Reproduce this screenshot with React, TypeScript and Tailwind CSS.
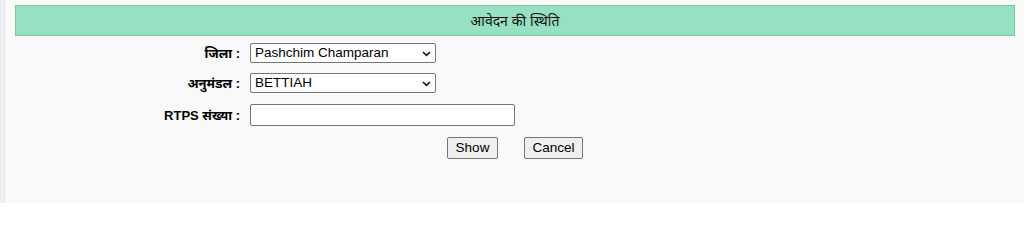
import React from "react";

function Chevron() {
  return (
    <svg
      className="pointer-events-none absolute right-[5px] top-[8px]"
      width="9"
      height="6"
      viewBox="0 0 9 6"
      fill="none"
    >
      <path d="M1 1 L4.5 4.4 L8 1" stroke="#111" strokeWidth="1.6" />
    </svg>
  );
}

function SelectBox({ value }: { value: string }) {
  return (
    <div className="relative h-[20px] w-[186px]">
      <select
        defaultValue={value}
        className="block h-[20px] w-[186px] appearance-none rounded-[2px] border border-[#767676] bg-white pl-[4px] text-[13.5px] leading-[18px] text-black outline-none"
        style={{ fontFamily: '"Liberation Sans", Arial, sans-serif' }}
      >
        <option>{value}</option>
      </select>
      <Chevron />
    </div>
  );
}

const label = "w-[241px] translate-y-[1px] pr-[1px] text-right text-[13px] font-bold leading-[20px] text-black";

export default function App() {
  const font = { fontFamily: '"Liberation Sans", Arial, "Noto Sans Devanagari", sans-serif' };
  return (
    <div className="relative min-h-[203px] w-full overflow-hidden bg-[#f9f9f9]" style={font}>
      <div className="absolute left-0 top-0 h-full w-[2px] bg-[#efedf3]" />
      <div className="absolute left-[3px] top-0 h-full w-[2px] bg-[#ebe8f0]" />
      <div className="pt-[5px]">
        <div className="ml-[15px] flex h-[31px] w-[1000px] items-center justify-center border border-[#7cc8a2] bg-[#97e0c1] text-[14px] leading-[20px] text-[#111]">
          आवेदन की स्थिति
        </div>
        <div className="mt-[7px] flex flex-col">
          <div className="flex h-[20px] items-center">
            <div className={label}>जिला :</div>
            <div className="ml-[9px] h-[20px]">
              <SelectBox value="Pashchim Champaran" />
            </div>
          </div>
          <div className="mt-[10px] flex h-[20px] items-center">
            <div className={label}>अनुमंडल :</div>
            <div className="ml-[9px] h-[20px]">
              <SelectBox value="BETTIAH" />
            </div>
          </div>
          <div className="mt-[11px] flex h-[22px] items-center">
            <div className={label}>RTPS संख्या :</div>
            <div className="ml-[9px] h-[22px]">
              <input
                type="text"
                className="block h-[22px] w-[265px] rounded-[2px] border border-[#767676] bg-white outline-none"
              />
            </div>
          </div>
          <div className="mt-[11px] flex h-[22px] w-[1030px] items-center justify-center gap-[26px]">
            <button className="h-[22px] w-[51px] rounded-[2px] border border-[#767676] bg-[#efefef] text-[13.5px] leading-[18px] text-black">
              Show
            </button>
            <button className="h-[22px] w-[59px] rounded-[2px] border border-[#767676] bg-[#efefef] text-[13.5px] leading-[18px] text-black">
              Cancel
            </button>
          </div>
        </div>
      </div>
    </div>
  );
}
